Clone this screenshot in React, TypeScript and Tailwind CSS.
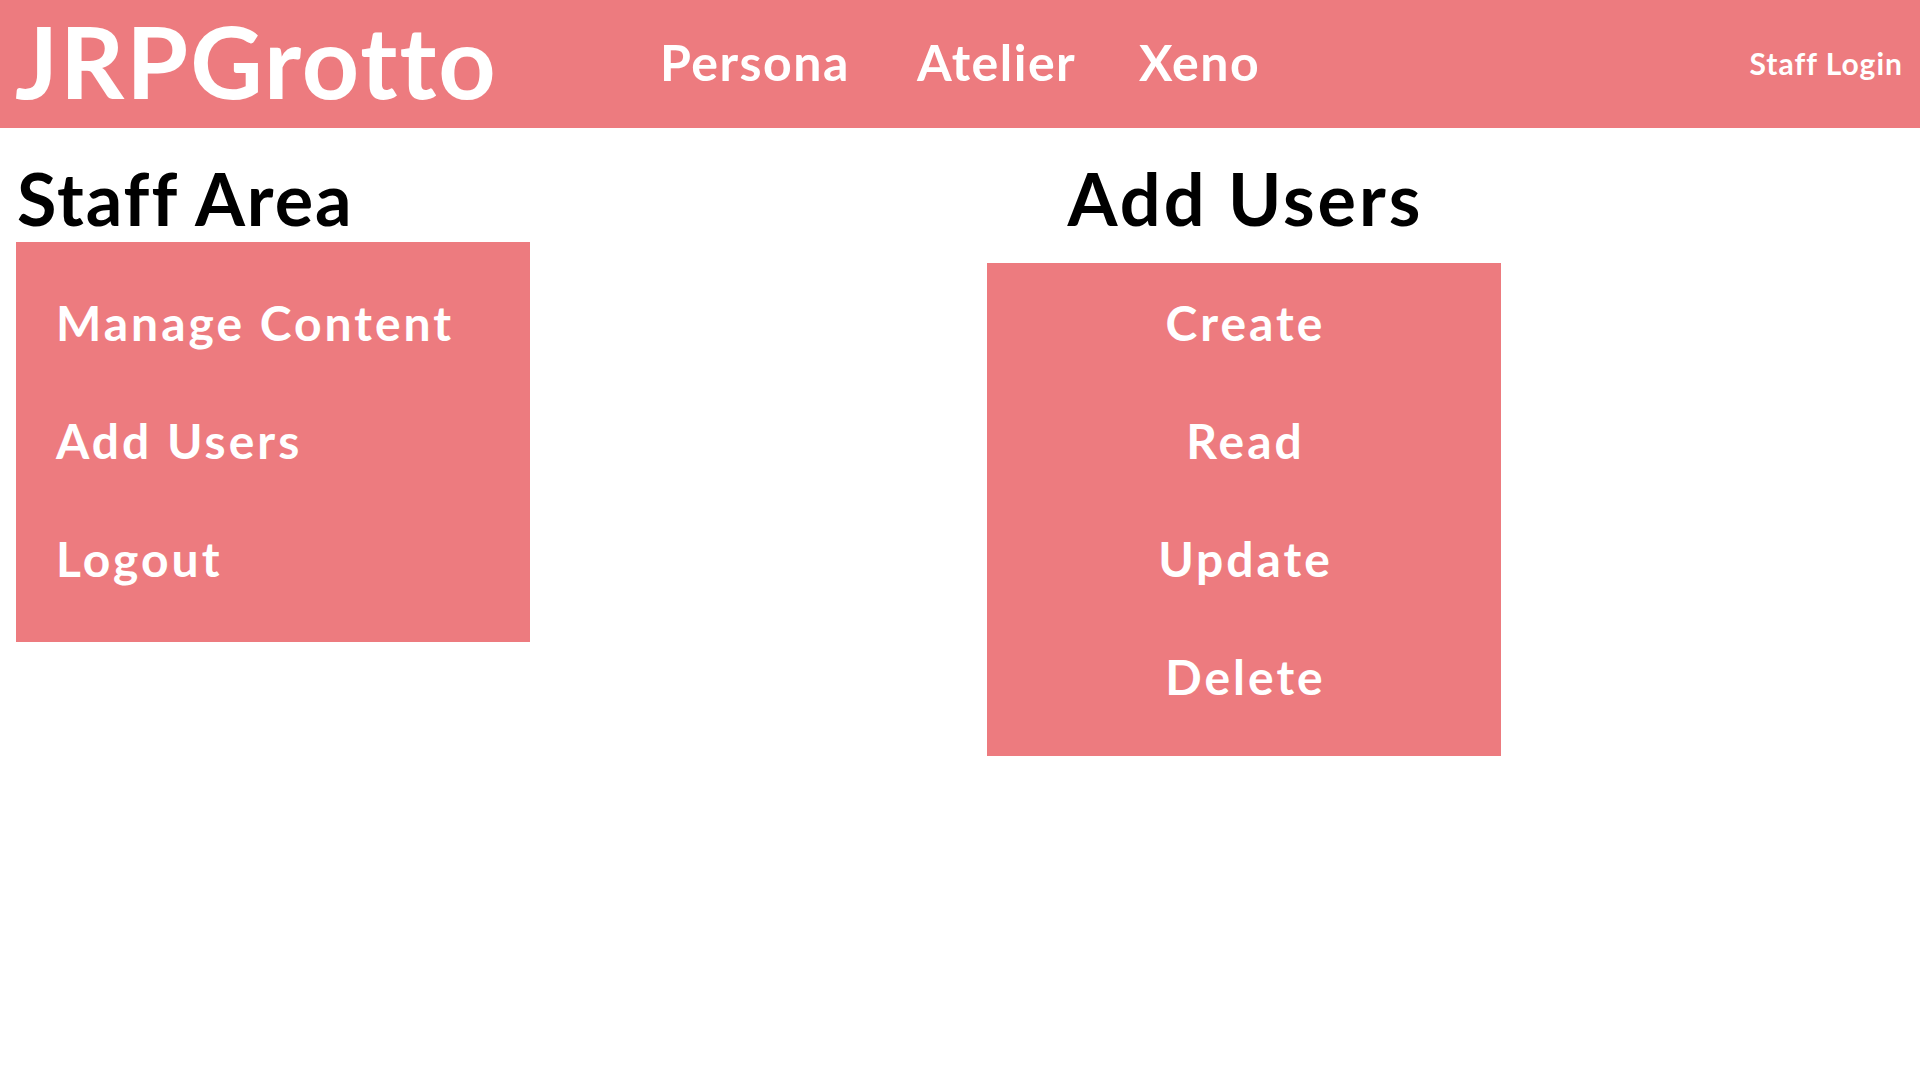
// JRPGrotto | staff area, add users panel
import type { ReactNode } from 'react'

const font = { fontFamily: 'Lato, "Open Sans", sans-serif' }

const navItems = [
  { label: 'Persona', w: 'w-[257px]' },
  { label: 'Atelier', w: 'w-[222px]' },
  { label: 'Xeno', w: 'w-[150px]' },
]

const staffLinks = ['Manage Content', 'Add Users', 'Logout']
const crudLinks = ['Create', 'Read', 'Update', 'Delete']

function Panel({ children, className = '' }: { children: ReactNode; className?: string }) {
  return <div className={`flex flex-col gap-[60px] bg-[#ed7b7f] ${className}`}>{children}</div>
}

export default function App() {
  return (
    <div className="min-h-screen w-full bg-white" style={font}>
      {/* top bar */}
      <header className="flex h-[128px] items-start bg-[#ed7b7f] text-white">
        <div className="w-[660px] shrink-0 pl-[15px]">
          <span className="block text-[100px] font-bold leading-[120px] tracking-[2px]">JRPGrotto</span>
        </div>
        <nav className="mt-[32px] flex">
          {navItems.map((n) => (
            <a
              key={n.label}
              href="#"
              className={`${n.w} text-[50px] font-bold leading-[60px] tracking-[1.5px]`}
            >
              {n.label}
            </a>
          ))}
        </nav>
        <a
          href="#"
          className="ml-auto mt-[45px] pr-[17px] text-[30px] font-bold leading-[36px] tracking-[1px]"
        >
          Staff Login
        </a>
      </header>

      <main className="flex items-start">
        {/* staff menu */}
        <section className="ml-[16px] w-[514px] shrink-0">
          <h1 className="mt-[27px] pl-[1px] text-[72px] font-bold leading-[86px] tracking-[2px] text-black">
            Staff Area
          </h1>
          <Panel className="mt-[1px] pt-[52px] pb-[54px] pl-[40px]">
            {staffLinks.map((s) => (
              <a
                key={s}
                href="#"
                className="text-[48px] font-bold leading-[58px] tracking-[3px] text-white"
              >
                {s}
              </a>
            ))}
          </Panel>
        </section>

        {/* add users */}
        <section className="ml-[457px] w-[514px] shrink-0">
          <h1 className="mt-[27px] pl-[3px] text-center text-[72px] font-bold leading-[86px] tracking-[3px] text-black">
            Add Users
          </h1>
          <Panel className="mt-[22px] items-center pt-[31px] pb-[50px] pl-[3px]">
            {crudLinks.map((c) => (
              <a
                key={c}
                href="#"
                className="text-[48px] font-bold leading-[58px] tracking-[3px] text-white"
              >
                {c}
              </a>
            ))}
          </Panel>
        </section>
      </main>
    </div>
  )
}
